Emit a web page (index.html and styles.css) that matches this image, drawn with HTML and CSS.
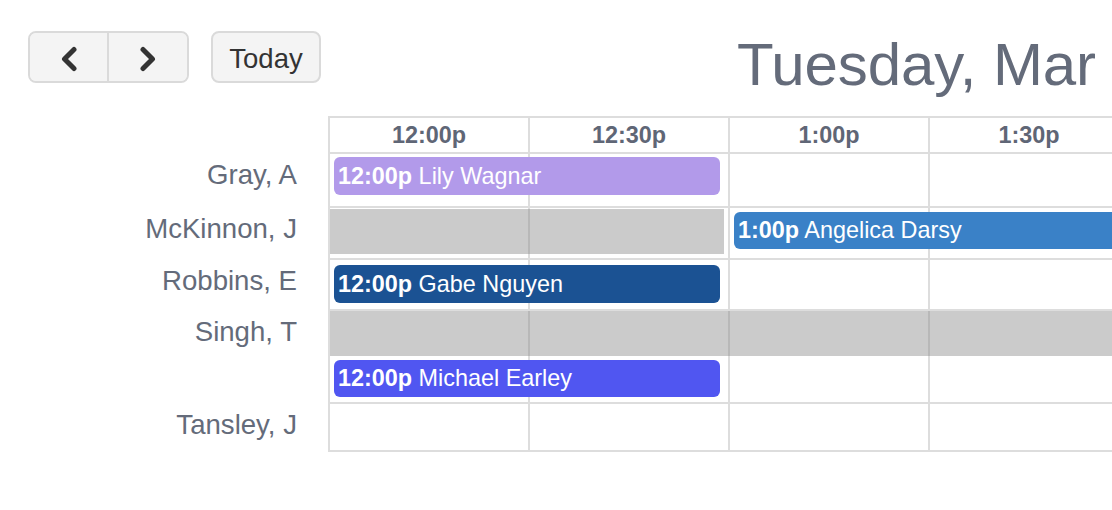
FILE: index.html
```html
<!DOCTYPE html>
<html lang="en">
<head>
<meta charset="utf-8">
<title>Timeline</title>
<link rel="stylesheet" href="styles.css">
</head>
<body>
<div class="toolbar">
  <div class="btn-group">
    <button class="btn nav-btn prev" aria-label="prev">
      <svg width="18" height="26" viewBox="0 0 18 26"><polyline points="14,3.5 4.5,13 14,22.5" fill="none" stroke="#333" stroke-width="5" stroke-linecap="round" stroke-linejoin="round"/></svg>
    </button>
    <button class="btn nav-btn next" aria-label="next">
      <svg width="18" height="26" viewBox="0 0 18 26"><polyline points="4,3.5 13.5,13 4,22.5" fill="none" stroke="#333" stroke-width="5" stroke-linecap="round" stroke-linejoin="round"/></svg>
    </button>
  </div>
  <button class="btn today">Today</button>
  <h2 class="title">Tuesday, Mar</h2>
</div>

<div class="cal">
  <div class="name"></div>
  <div class="lane lane-head">
    <div class="cell head-cell">12:00p</div>
    <div class="cell head-cell">12:30p</div>
    <div class="cell head-cell">1:00p</div>
    <div class="cell head-cell">1:30p</div>
  </div>

  <div class="name">Gray, A</div>
  <div class="lane lane-gray">
    <div class="cell"></div><div class="cell"></div><div class="cell"></div><div class="cell"></div>
    <div class="event ev-lily"><b>12:00p</b> Lily Wagnar</div>
  </div>

  <div class="name">McKinnon, J</div>
  <div class="lane lane-mck">
    <div class="cell"></div><div class="cell"></div><div class="cell"></div><div class="cell"></div>
    <div class="bg-event bg-mck"></div>
    <div class="event ev-angelica"><b>1:00p</b> Angelica Darsy</div>
  </div>

  <div class="name">Robbins, E</div>
  <div class="lane lane-rob">
    <div class="cell"></div><div class="cell"></div><div class="cell"></div><div class="cell"></div>
    <div class="event ev-gabe"><b>12:00p</b> Gabe Nguyen</div>
  </div>

  <div class="name">Singh, T</div>
  <div class="lane lane-singh">
    <div class="cell"></div><div class="cell"></div><div class="cell"></div><div class="cell"></div>
    <div class="bg-event bg-singh"></div>
    <div class="event ev-michael"><b>12:00p</b> Michael Earley</div>
  </div>

  <div class="name">Tansley, J</div>
  <div class="lane lane-tan">
    <div class="cell"></div><div class="cell"></div><div class="cell"></div><div class="cell"></div>
  </div>
</div>
</body>
</html>
```

FILE: styles.css
```css
html, body {
  margin: 0;
  padding: 0;
  background: #fff;
  overflow: hidden;
}

body {
  width: 1112px;
  height: 510px;
  font-family: "Liberation Sans", Arial, Helvetica, sans-serif;
  color: #646b7a;
}

.toolbar {
  display: flex;
  align-items: flex-start;
  box-sizing: border-box;
  height: 116px;
  padding: 31px 0 0 28px;
  white-space: nowrap;
}

.btn {
  font-family: inherit;
  background: #f4f4f4;
  border: 2px solid #dadada;
  border-radius: 8px;
  padding: 0;
  margin: 0;
  color: #333;
  box-sizing: border-box;
  height: 52px;
}

.btn-group {
  display: flex;
  border: 2px solid #dadada;
  border-radius: 8px;
  background: #f4f4f4;
  height: 52px;
  box-sizing: border-box;
  overflow: hidden;
}

.nav-btn {
  border: none;
  border-radius: 0;
  height: 48px;
  padding-top: 3px;
  display: flex;
  align-items: center;
  justify-content: center;
}

.nav-btn.prev {
  width: 77px;
}

.nav-btn.next {
  width: 80px;
  border-left: 2px solid #dadada;
}

.nav-btn svg {
  display: block;
}

.today {
  margin-left: 22px;
  width: 110px;
  font-size: 27.5px;
  line-height: 50px;
  padding-top: 1px;
}

.title {
  margin: 0 0 0 416px;
  font-size: 60px;
  font-weight: normal;
  line-height: 67px;
  color: #646b7a;
  letter-spacing: -0.1px;
}

.cal {
  display: grid;
  grid-template-columns: 328px 820px;
}

.name {
  box-sizing: border-box;
  text-align: right;
  padding: 7px 31px 0 0;
  font-size: 27.6px;
  line-height: 32px;
  color: #646b7a;
  white-space: nowrap;
}

.lane {
  position: relative;
  display: flex;
  box-sizing: border-box;
  border-top: 2px solid #ddd;
}

.cell {
  box-sizing: border-box;
  width: 200px;
  flex: 0 0 200px;
  border-left: 2px solid #ddd;
}

.head-cell {
  display: flex;
  align-items: center;
  justify-content: center;
  font-weight: bold;
  font-size: 23.4px;
  color: #5f6676;
}

.lane-head { height: 36px; }
.lane-gray { height: 54px; }
.lane-mck { height: 52px; }
.lane-rob { height: 51px; }
.lane-singh { height: 93px; }
.lane-tan {
  height: 50px;
  border-bottom: 2px solid #ddd;
}

.event {
  position: absolute;
  height: 38px;
  box-sizing: border-box;
  padding-left: 4px;
  border-radius: 6px;
  color: #fff;
  font-size: 23.4px;
  line-height: 38px;
  white-space: nowrap;
  overflow: hidden;
}

.event b {
  font-weight: bold;
}

.bg-event {
  position: absolute;
  background: rgba(140, 140, 140, 0.45);
}

.ev-lily {
  top: 3px;
  left: 6px;
  width: 386px;
  background: #b29aea;
}

.bg-mck {
  top: 1px;
  left: 2px;
  width: 394px;
  height: 45px;
}

.ev-angelica {
  top: 4px;
  left: 406px;
  width: 420px;
  height: 37px;
  line-height: 37px;
  background: #3a81c7;
}

.ev-gabe {
  top: 5px;
  left: 6px;
  width: 386px;
  background: #1b5293;
}

.bg-singh {
  top: 0;
  left: 2px;
  width: 820px;
  height: 45px;
}

.ev-michael {
  top: 49px;
  left: 6px;
  width: 386px;
  height: 37px;
  line-height: 37px;
  background: #5056f1;
}
```
